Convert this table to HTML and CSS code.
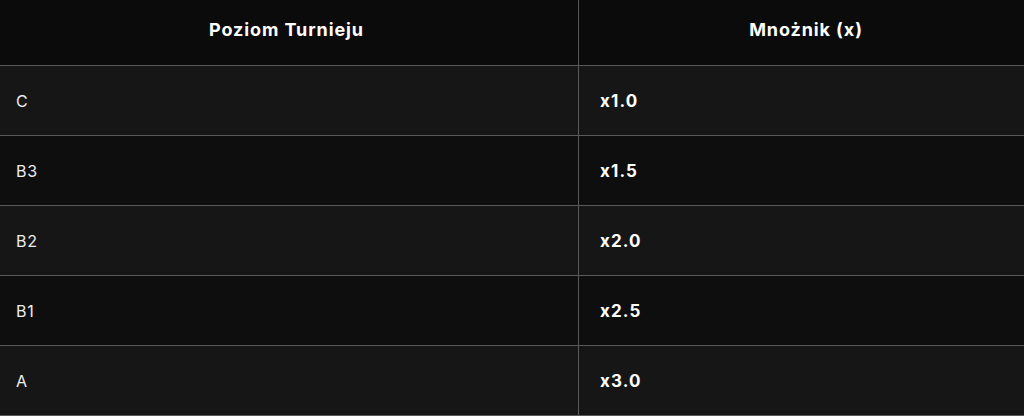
FILE: index.html
```html
<!DOCTYPE html>
<html lang="pl">
<head>
<meta charset="utf-8">
<title>Mnożniki turniejów</title>
<link rel="stylesheet" href="styles.css">
</head>
<body>
<table class="tiers">
  <thead>
    <tr>
      <th class="col-level">Poziom Turnieju</th>
      <th class="col-mult">Mnożnik (x)</th>
    </tr>
  </thead>
  <tbody>
    <tr class="row-light"><td class="level">C</td><td class="mult">x1.0</td></tr>
    <tr class="row-dark"><td class="level">B3</td><td class="mult">x1.5</td></tr>
    <tr class="row-light"><td class="level">B2</td><td class="mult">x2.0</td></tr>
    <tr class="row-dark"><td class="level">B1</td><td class="mult">x2.5</td></tr>
    <tr class="row-light"><td class="level">A</td><td class="mult">x3.0</td></tr>
  </tbody>
</table>
</body>
</html>
```

FILE: styles.css
```css
html, body {
  margin: 0;
  padding: 0;
  background: #0c0c0c;
}

body {
  font-family: Inter, "Noto Sans", "Liberation Sans", sans-serif;
  color: #ffffff;
  width: 1024px;
  height: 416px;
  overflow: hidden;
}

.tiers {
  width: 1024px;
  border-collapse: collapse;
  table-layout: fixed;
}

.col-level {
  width: 573px;
}

.tiers th {
  height: 58px;
  padding: 0 0 7px 0;
  background: #0b0b0b;
  font-weight: 700;
  font-size: 18px;
  letter-spacing: 0.9px;
  text-align: center;
  border-bottom: 1px solid #595959;
}

.tiers th.col-level {
  padding-right: 5px;
  border-right: 1px solid #595959;
}

.tiers th.col-mult {
  padding-left: 9px;
}

.tiers td {
  height: 69px;
  padding: 0;
  border-bottom: 1px solid #595959;
}

.tiers td.level {
  padding-left: 16px;
  font-size: 16px;
  letter-spacing: 0.9px;
  font-weight: 400;
  color: #ededed;
  border-right: 1px solid #595959;
}

.tiers td.mult {
  padding-left: 21px;
  font-size: 17px;
  letter-spacing: 1.1px;
  font-weight: 700;
  color: #ffffff;
}

.row-light {
  background: #161616;
}

.row-dark {
  background: #0e0e0e;
}
```
